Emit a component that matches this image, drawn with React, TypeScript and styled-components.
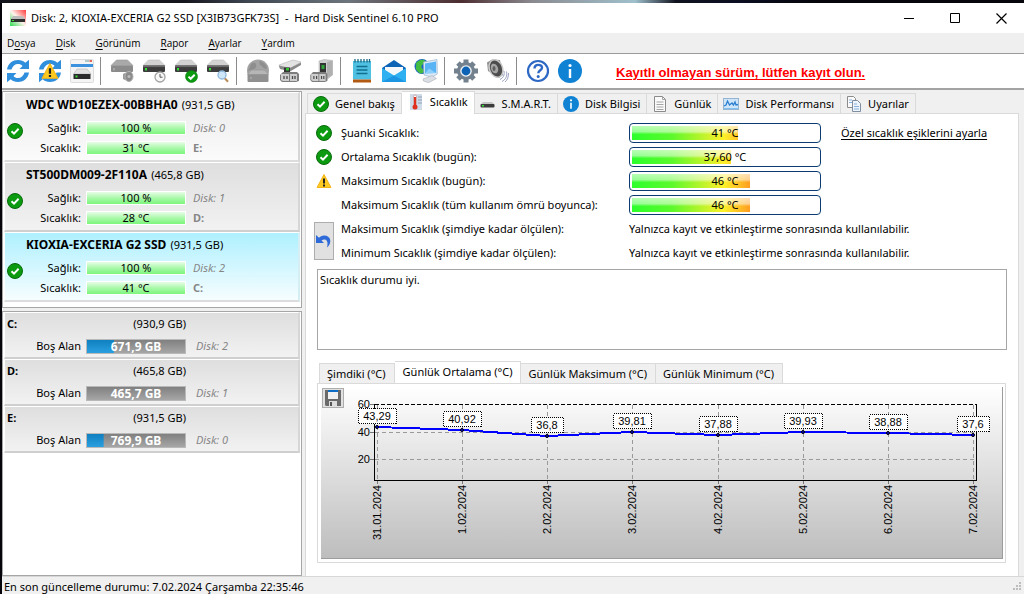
import React from 'react';
import styled, { createGlobalStyle, css } from 'styled-components';

const GlobalStyle = createGlobalStyle`
  *, *::before, *::after { box-sizing: border-box; }
  body {
    margin: 0;
    background: #05050b;
    color: #000;
    font: 11px/16px "Noto Sans", "Open Sans", sans-serif;
  }
  button { font: inherit; color: inherit; margin: 0; padding: 0; border: 0; background: none; }
`;

/* ---------- window frame ---------- */

const Desktop = styled.div`
  min-height: 100vh;
  padding: 3px 0 0 2px;
  display: flex;
  background: linear-gradient(to right, #14141c 0, #15151d 18%, #3c4450 24%, #6d757c 34%, #4c2d30 45%, #8a8a90 52%, #9fc0cc 62%, #10131f 66%, #0a0e20 72%, #05050b 80%) top / 100% 3px no-repeat, #05050b;
`;

const Window = styled.div`
  flex: 1;
  min-width: 0;
  display: flex;
  flex-direction: column;
  background: #f0f0f0;
`;

const TitleBar = styled.header`
  display: flex;
  align-items: center;
  height: 30px;
  padding-left: 8px;
  background: #fff;
`;

const Title = styled.h1`
  flex: 1;
  margin: 0 0 0 5px;
  font-size: 11px;
  font-weight: 400;
  white-space: pre;
`;

const CaptionButton = styled.button`
  display: grid;
  place-items: center;
  width: 46px;
  height: 28px;
`;

const MenuBar = styled.nav`
  display: flex;
  gap: 20px;
  height: 21px;
  padding-left: 5px;
  background: #efefef;
  border-bottom: 1px solid #9a9a9a;
`;

const MenuItem = styled.button`
  font-family: "Open Sans", sans-serif;
  font-size: 10px;
  u { text-underline-offset: 2px; }
`;

/* ---------- toolbar ---------- */

const Toolbar = styled.div`
  display: flex;
  align-items: center;
  height: 36px;
  background: #fff;
  border-bottom: 2px solid #a3a3a3;
`;

const ToolButton = styled.button`
  display: grid;
  place-items: center;
  width: 32px;
  height: 32px;
`;

const ToolSeparator = styled.span`
  width: 1px;
  height: 28px;
  margin: 0 5px 0 2px;
  background: #8a8a8a;
`;

const RegisterLink = styled.a`
  margin-left: 30px;
  padding-top: 4px;
  color: #f00;
  font: bold 13px/16px "Liberation Sans", sans-serif;
  text-underline-offset: 2px;
`;

/* ---------- left column ---------- */

const Main = styled.main`
  flex: 1;
  display: flex;
  gap: 3px;
  padding-right: 5px;
`;

const Sidebar = styled.aside`
  flex: 0 0 300px;
  display: flex;
  flex-direction: column;
  gap: 3px;
  padding-top: 1px;
`;

const SidePanel = styled.section<{ $fill?: boolean }>`
  flex: ${p => (p.$fill ? '1' : '0 0 auto')};
  padding: 0 1px 5px;
  background: #fff;
  border: 1px solid #a6a6a6;
`;

type Tone = 'light' | 'grey' | 'selected';

const tones: Record<Tone, string> = {
  light: 'linear-gradient(#e9e9e9, #fbfbfb)',
  grey: 'linear-gradient(#dedede, #f2f2f2)',
  selected: 'linear-gradient(#aef0ff, #f6fdff)',
};

const itemFrame = css<{ $tone: Tone }>`
  display: grid;
  align-items: center;
  column-gap: 3px;
  padding-left: 2px;
  background: ${p => tones[p.$tone]};
  border: solid #fff;
  border-width: 1px 2px 2px 1px;
  border-right-color: ${p => (p.$tone === 'selected' ? '#d5eef4' : '#d6d6d6')};
  border-bottom-color: ${p => (p.$tone === 'grey' ? '#cfcfcf' : '#dcdcdc')};
`;

const DiskItem = styled.article<{ $tone: Tone }>`
  ${itemFrame}
  grid-template: 24px 19px 19px / 16px 57px 100px 1fr;
  row-gap: 1px;
  height: 70px;
`;

const DiskName = styled.h2`
  grid-column: 2 / -1;
  margin: 0;
  font-size: 12px;
  line-height: 16px;
  font-weight: 700;
  span { padding-left: 1px; font-size: 11px; font-weight: 400; }
`;

const StatusCell = styled.span`
  grid-column: 1;
  grid-row: 2 / 4;
  align-self: start;
  height: 16px;
  margin-top: 5px;
`;

const FieldLabel = styled.span`
  grid-column: 2;
  padding-right: 2px;
  text-align: right;
  white-space: nowrap;
`;

const HealthBar = styled.span`
  height: 14px;
  border: 1px solid #fff;
  background: linear-gradient(#e6fde6, #a4f8a4 55%, #7df67d);
  line-height: 12px;
  text-align: center;
`;

const Note = styled.span<{ $bold?: boolean }>`
  padding-left: 4px;
  color: #868686;
  font-style: ${p => (p.$bold ? 'normal' : 'italic')};
  font-weight: ${p => (p.$bold ? 700 : 400)};
`;

const VolumeItem = styled.article<{ $tone: Tone }>`
  ${itemFrame}
  grid-template: 22px 22px / 16px 57px 100px 1fr;
  height: 47px;
`;

const VolumeNote = styled(Note)`
  padding-left: 7px;
`;

const VolumeName = styled.h2`
  grid-column: 1 / 3;
  margin: 0;
  font-size: 11px;
`;

const VolumeSize = styled.span`
  text-align: right;
`;

const SpaceBar = styled.span<{ $used: number }>`
  height: 15px;
  border: 1px solid #b9b9b9;
  background:
    linear-gradient(#0f80c0, #2a9fe0) left / ${p => p.$used}% 100% no-repeat,
    linear-gradient(#808080, #a6a6a6);
  color: #fff;
  font-size: 12px;
  font-weight: 700;
  line-height: 13px;
  text-align: center;
`;

/* ---------- right column ---------- */

const Content = styled.div`
  flex: 1;
  min-width: 0;
  display: flex;
  flex-direction: column;
`;

const TabList = styled.div<{ $indent: number }>`
  display: flex;
  align-items: flex-end;
  height: 23px;
  margin-left: ${p => p.$indent}px;
`;

const Tab = styled.button<{ $active?: boolean; $pad: number }>`
  display: flex;
  align-items: center;
  gap: 6px;
  height: 20px;
  padding: 0 ${p => p.$pad + 1}px 0 ${p => p.$pad}px;
  border: solid #dadada;
  border-width: 1px 1px 0 0;
  background: #f0f0f0;
  white-space: nowrap;
  &:first-child { border-left-width: 1px; }
  ${p => p.$active && css`
    height: 23px;
    margin-bottom: -1px;
    padding: 0 ${p.$pad + 1}px 3px;
    background: #fff;
    position: relative;
  `}
`;

const TabPanel = styled.section`
  flex: 1;
  display: flex;
  flex-direction: column;
  padding: 7px 11px 0;
  background: #fff;
  border: 1px solid #dadada;
  border-bottom: 0;
`;

const Readings = styled.div`
  display: grid;
  grid-template-columns: 20px 281px 192px 1fr;
  grid-auto-rows: 24px;
  column-gap: 7px;
  align-items: center;
  margin-left: -3px;
`;

const ReadingIcon = styled.span`
  grid-column: 1;
  justify-self: center;
  height: 16px;
`;

const ReadingLabel = styled.span`
  grid-column: 2;
  white-space: nowrap;
`;

const ReadingText = styled.span`
  grid-column: 3 / -1;
`;

const ThresholdLink = styled.a`
  padding-left: 13px;
  color: #000;
  text-underline-offset: 2px;
`;

const ResetButton = styled.button`
  grid-column: 1;
  grid-row: 5 / 7;
  display: grid;
  place-items: center;
  height: 38px;
  background: #e1e1e1;
  border: 1px solid #adadad;
`;

const Gauge = styled.span`
  grid-column: 3;
  display: grid;
  height: 20px;
  padding: 2px;
  border: 1px solid #0b3b70;
  border-radius: 4px;
  > * { grid-area: 1 / 1; }
`;

const GaugeFill = styled.span<{ $width: number }>`
  width: ${p => p.$width}px;
  background:
    linear-gradient(rgba(255, 255, 255, 0.65), rgba(255, 255, 255, 0.5) 40%, rgba(255, 255, 255, 0) 60%),
    linear-gradient(to right, #2cff2c 0, #5cf92c 40px, #fff02a 92px, #ff9020 122px);
`;

const GaugeValue = styled.span`
  line-height: 14px;
  text-align: center;
`;

const StatusText = styled.textarea`
  display: block;
  width: 100%;
  height: 81px;
  margin: 4px 0 10px;
  padding: 2px;
  border: 1px solid #a6a6a6;
  color: #000;
  font: inherit;
  resize: none;
`;

const ChartPanel = styled.div`
  position: relative;
  padding: 3px 2px 3px 3px;
  margin-right: 1px;
  border: 1px solid #dadada;
`;

const ChartFace = styled.div`
  border: solid #9c9c9c;
  border-width: 0 1px 1px 0;
  background: linear-gradient(#fff, #bdbdbd);
`;

const ChartSvg = styled.svg`
  display: block;
  width: 100%;
  font: 11px "Liberation Sans", sans-serif;
`;

const SaveButton = styled.button`
  position: absolute;
  top: 4px;
  left: 4px;
  display: grid;
  place-items: center;
  width: 22px;
  height: 20px;
  background: #e1e1e1;
  border: 1px solid #adadad;
`;

const StatusBar = styled.footer`
  display: flex;
  align-items: center;
  justify-content: space-between;
  height: 18px;
  padding: 2px 2px 0;
  border-top: 1px solid #d7d7d7;
`;

/* ---------- icons ---------- */

const CheckIcon = () => (
  <svg width="16" height="16" viewBox="0 0 16 16" aria-hidden="true">
    <circle cx="8" cy="8" r="7.5" fill="#0b9a10" stroke="#0a6b0d" />
    <path d="M4.5 8.2 7 10.6 11.6 5.8" fill="none" stroke="#fff" strokeWidth="2" />
  </svg>
);

const WarningShape = () => (
  <>
    <path d="M8 1.5 15 14.5H1Z" fill="#ffca1f" stroke="#f3b61a" strokeLinejoin="round" />
    <path d="M8 5.5v5M8 11.5v2" stroke="#222" strokeWidth="2" />
  </>
);

const WarningIcon = () => (
  <svg width="16" height="16" viewBox="0 0 16 16" aria-hidden="true"><WarningShape /></svg>
);

const InfoIcon = ({ size }: { size: number }) => (
  <svg width={size} height={size} viewBox="0 0 24 24" aria-hidden="true">
    <circle cx="12" cy="12" r="12" fill="#0f82d4" />
    <circle cx="12" cy="6.5" r="1.6" fill="#fff" />
    <path d="M12 10v9" stroke="#fff" strokeWidth="2.4" />
  </svg>
);

const Drive = ({ pale = false }: { pale?: boolean }) => (
  <>
    <path d="M6.5 1h11L23 6.5H1Z" fill={pale ? '#a9a9a9' : '#d2d2d2'} stroke={pale ? '#989898' : '#bdbdbd'} strokeWidth=".6" />
    <rect x="1" y="6.5" width="22" height="6.5" rx="1" fill={pale ? '#8b8b8b' : '#3c3c3c'} />
    {!pale && <rect x="1" y="6.5" width="22" height="1.6" fill="#6a6a6a" />}
    <rect x="3" y="9" width="2" height="2.4" fill={pale ? '#a6a6a6' : '#35e035'} />
  </>
);

const RefreshArrows = () => (
  <g fill="#2f8fdd">
    <path d="M1 10.5C2 4 7 1 12 1c3 0 5.5 1 7.3 2.8L23 .8V10h-9.500l3-3C15.500 5.600 13.800 5 12 5 9 5 6.500 7 5.500 10.500Z" />
    <path d="M23 13.500C22 20 17 23 12 23c-3 0-5.500-1-7.300-2.800L1 23.200V14h9.500l-3 3c1 1.400 2.700 2 4.500 2 3 0 5.500-2 6.500-5.500Z" />
  </g>
);

const PlugBlocks = () => (
  <>
    <path d="M5 13h14l2 2v7l-3 1H4l-2-2v-5Z" fill="#7d7d7d" />
    <path d="M3 15h8v7H5l-2-1ZM12 15h7v7h-7Z" fill="#cecece" />
    <path d="M6 17v3M9 17v3M14.500 17v3M17 17v3" stroke="#4a4a4a" strokeWidth="1.300" />
  </>
);

const toolIcons: Record<string, React.ReactNode> = {
  refresh: <RefreshArrows />,
  refreshWarn: (
    <>
      <RefreshArrows />
      <g transform="translate(3 3) scale(1.120)"><WarningShape /></g>
    </>
  ),
  overview: (
    <>
      <rect x=".5" y=".5" width="23" height="23" rx="1" fill="#f4f4f4" stroke="#dcdcdc" />
      <path d="M15 2h4" stroke="#9bb" strokeWidth="1.500" />
      <path d="M19.500 2H22" stroke="#d43a2c" strokeWidth="1.500" />
      <rect x="1" y="5" width="22" height="3" fill="#3d92e0" />
      <path d="M7 10h10l4 5H3.500Z" fill="#e2e2e2" stroke="#aaa" strokeWidth=".5" />
      <rect x="3.500" y="15" width="17" height="5" fill="#2c2c2c" />
      <rect x="5.500" y="16.500" width="2" height="2" fill="#35e035" />
    </>
  ),
  acoustic: (
    <>
      <Drive pale />
      <path d="m13 15 6-3 3 2v7l-3 2-6-3Z" fill="#9a9a9a" />
      <ellipse cx="19" cy="17.500" rx="4" ry="5" fill="#8a8a8a" stroke="#b4b4b4" />
      <circle cx="19" cy="17.500" r="1.600" fill="#bcbcbc" />
    </>
  ),
  schedule: (
    <>
      <Drive />
      <circle cx="18" cy="18" r="5" fill="#f7f7f7" stroke="#a3a3a3" strokeWidth="1.300" />
      <path d="M18 15v3.200h2.500" fill="none" stroke="#555" />
    </>
  ),
  test: (
    <>
      <Drive />
      <circle cx="17.500" cy="17.500" r="6" fill="#0b9a10" stroke="#0a7a0d" strokeWidth=".6" />
      <path d="m14.500 17.600 2.200 2.200 4-4" fill="none" stroke="#fff" strokeWidth="2" />
    </>
  ),
  search: (
    <>
      <Drive />
      <path d="m18.500 19 3.500 3.800" stroke="#b98c5a" strokeWidth="2" />
      <circle cx="16" cy="16" r="4" fill="#cfe7fa" stroke="#8fb8dc" strokeWidth="1.300" />
    </>
  ),
  network: (
    <>
      <circle cx="12" cy="11.500" r="11" fill="#a3a3a3" />
      <path d="M5 5c4-3 6 0 5 3s-5 2-8 4M13 2c6 1 8 5 8 8-4 0-4-3-7-4Z" fill="#8e8e8e" />
      <path d="M5.500 11h13l4 4.500H1.500Z" fill="#b6b6b6" stroke="#959595" strokeWidth=".6" />
      <rect x="1.500" y="15.500" width="21" height="7.500" rx="1" fill="#909090" />
      <path d="M4 19h2" stroke="#b9b9b9" />
    </>
  ),
  power: (
    <>
      <path d="m1 6 14-5 8 2-10 6H2Z" fill="#e3e3e3" stroke="#b2b2b2" strokeWidth=".6" />
      <path d="M1 6.500 12 9v3.500L2 10ZM12 9l11-5.500V6l-11 6.500Z" fill="#8a8a8a" />
      <path d="M6 8.500h6V13H6Z" fill="#333" />
      <path d="M8 9h3v2.500H8Z" fill="#35c535" />
      <PlugBlocks />
    </>
  ),
  eject: (
    <>
      <path d="m9 2 5-1.500 8.500 1V16l-5 4H9Z" fill="#cfcfcf" stroke="#a4a4a4" strokeWidth=".5" />
      <path d="m17 3 5.500-1.500V16L17 19Z" fill="#b0b0b0" />
      <path d="M10 4h6v10h-6Z" fill="#333" />
      <path d="M11.500 6h3v4h-3Z" fill="#2fa53a" />
      <g transform="translate(-1.500 0) scale(.9 1)"><PlugBlocks /></g>
    </>
  ),
  report: (
    <>
      <rect x="3" y="2" width="18" height="18.500" fill="#4fc0e2" />
      <path d="M5 0v3.500M8 0v3.500M11 0v3.500M14 0v3.500M17 0v3.500M19.500 0v3.500" stroke="#17667f" strokeWidth="1.300" />
      <path d="M6.500 7.500h11M6.500 11h11M6.500 14.500h11" stroke="#136f8f" strokeWidth="1.500" />
      <rect x="3" y="20.500" width="18" height="3" fill="#b35a12" />
    </>
  ),
  mail: (
    <>
      <path d="M0 9 12 1l12 8v3H0Z" fill="#0d63b5" />
      <path d="M3 8h18v8H3Z" fill="#f4f8fb" />
      <path d="m0 9 12 7.500L24 9v14H0Z" fill="#2fb0f0" />
      <path d="m0 23 12-6.500L24 23Z" fill="#1c96e2" />
    </>
  ),
  remote: (
    <>
      <circle cx="8" cy="7.500" r="7.500" fill="#1c62c4" />
      <path d="M1.500 5c3-5 8-5 10-3 0 4-3 2-4 5s4 3 2 6-5 1-7-2 1-4-1-6Z" fill="#42bd42" />
      <path d="m9.500 3 13.500-2.500.3 14.500-5.300 3-8-2Z" fill="#dcebf8" stroke="#9cb3c8" strokeWidth=".7" />
      <path d="m11 4.500 11-2 .2 11.500-11.200.5Z" fill="#58b4f4" />
      <path d="m11 14.500 4-5 7 4.500Z" fill="#8fd0fb" />
      <path d="m9 20 9-3.500 4.500 3-8 4.200-5-1.700Z" fill="#dadfe5" stroke="#a7adb5" strokeWidth=".6" />
    </>
  ),
  settings: (
    <>
      <g stroke="#73818e" strokeWidth="5">
        <path d="M12 .5v23M0 12h24" />
        <path d="m4 4 16 16M20 4 4 20" />
      </g>
      <circle cx="12" cy="12" r="9" fill="#73818e" />
      <circle cx="12" cy="12" r="5.800" fill="#eef2f5" />
      <circle cx="12" cy="12" r="4.400" fill="#0c62b5" />
    </>
  ),
  sound: (
    <>
      <path d="M1 3.500 6 .5l8 .5 3 15-4 3L2 12Z" fill="#8d8d8d" />
      <ellipse cx="10" cy="9.500" rx="6.500" ry="9" transform="rotate(-22 10 9.500)" fill="#4c4c4c" stroke="#c9c9c9" strokeWidth="1.500" />
      <ellipse cx="8.500" cy="9.500" rx="3.500" ry="5" transform="rotate(-22 8.500 9.500)" fill="#a5a5a5" />
      <ellipse cx="8" cy="9.500" rx="1.500" ry="2.500" fill="#5d5d5d" />
      <path d="M18 12c1 4-1 7-4 8.500M20.500 12.500c1 5-1 8-4.500 10M22.500 14c0 4-1 7-3.500 9" fill="none" stroke="#9aa1c4" />
    </>
  ),
  help: (
    <>
      <circle cx="12" cy="12" r="10" fill="#fff" stroke="#2d68c4" strokeWidth="2.200" />
      <path d="M8.500 9.500c0-5 7.500-4.500 7.500-.8 0 2.600-3.700 2.600-3.700 5.600" fill="none" stroke="#2d68c4" strokeWidth="2.400" />
      <circle cx="12.200" cy="17.500" r="1.500" fill="#2d68c4" />
    </>
  ),
};

const TitleIcon = () => (
  <svg width="16" height="16" viewBox="0 0 16 16" aria-hidden="true">
    <defs>
      <linearGradient id="corner" x1="1" y1="0" x2="0" y2="1">
        <stop offset="0" stopColor="#ff3a3a" />
        <stop offset=".5" stopColor="#fff3ee" />
        <stop offset="1" stopColor="#2fdc50" />
      </linearGradient>
    </defs>
    <rect width="16" height="16" fill="url(#corner)" />
    <path d="M3 6h10l2 3H1Z" fill="#bdbdbd" />
    <rect x="1" y="9" width="14" height="3" fill="#2f2f2f" />
    <rect x="2" y="10" width="2" height="1" fill="#35e035" />
  </svg>
);

const tabIcons: Record<string, React.ReactNode> = {
  heat: (
    <>
      <rect x="2" width="12" height="16" fill="#cfdbe6" />
      <path d="M10 3h4M10 6h4M10 9h4" stroke="#8fa3b5" />
      <rect x="5.500" y="1" width="3" height="11" rx="1.500" fill="#fff" stroke="#b88" strokeWidth=".6" />
      <path d="M7 3v9" stroke="#e0301e" strokeWidth="2" />
      <circle cx="7" cy="13" r="2.500" fill="#e0301e" />
    </>
  ),
  smart: (
    <>
      <path d="M3 6h9l2.500 2.500H.5Z" fill="#c5c5c5" />
      <rect x=".5" y="8" width="14" height="3.500" rx="1" fill="#3c3c3c" />
      <rect x="2" y="9" width="2" height="1.500" fill="#35e035" />
    </>
  ),
  log: (
    <>
      <path d="M2.500.5h8l3 3v12h-11Z" fill="#fafafa" stroke="#8b8b8b" />
      <path d="M10.500.5v3h3M4.500 6h7M4.500 8.500h7M4.500 11h7M4.500 13.500h7" fill="none" stroke="#a5a5a5" />
    </>
  ),
  perf: (
    <>
      <rect x=".5" y="2.500" width="15" height="11" fill="#cfe6fa" stroke="#93b5d2" />
      <path d="M1 12.500h14" stroke="#7fc0f0" />
      <path d="m1 10 2-1 1.500-4L6.500 9 9 7l1.500 2L12 6l1 3 2-.5" fill="none" stroke="#2b7fd0" strokeWidth="1.300" />
    </>
  ),
  alerts: (
    <>
      <path d="M1.500.5h6l2 2v9h-8Z" fill="#fafafa" stroke="#8b8b8b" />
      <path d="M6.500 4.500h5l3 3v8h-8Z" fill="#eef5fc" stroke="#7f8f9f" />
      <path d="M3 4h3M3 6.500h3M8 8h3M8 10.500h5M8 13h5" stroke="#86b1dd" />
    </>
  ),
};

const TabIcon = ({ name }: { name: string }) => {
  if (name === 'check') return <CheckIcon />;
  if (name === 'info') return <InfoIcon size={16} />;
  return <svg width="16" height="16" viewBox="0 0 16 16" aria-hidden="true">{tabIcons[name]}</svg>;
};

const SizeGrip = () => (
  <svg width="9" height="9" viewBox="0 0 9 9" fill="#bdbdbd" aria-hidden="true">
    <path d="M6 0h2v2H6ZM6 3h2v2H6ZM6 6h2v2H6ZM3 3h2v2H3ZM3 6h2v2H3ZM0 6h2v2H0Z" />
  </svg>
);

/* ---------- data ---------- */

const menus = [['D', 'o', 'sya'], ['', 'D', 'isk'], ['', 'G', 'örünüm'], ['', 'R', 'apor'], ['', 'A', 'yarlar'], ['', 'Y', 'ardım']];

const tools: [string, string][][] = [
  [['refresh', 'Yenile'], ['refreshWarn', 'Uyarıları yenile'], ['overview', 'Genel görünüm']],
  [['acoustic', 'Akustik'], ['schedule', 'Zamanla'], ['test', 'Disk testi'], ['search', 'Yüzey testi']],
  [['network', 'Ağ'], ['power', 'Güç'], ['eject', 'Çıkar']],
  [['report', 'Rapor'], ['mail', 'E-posta'], ['remote', 'Uzaktan izleme']],
  [['settings', 'Ayarlar'], ['sound', 'Ses']],
  [['help', 'Yardım'], ['info', 'Hakkında']],
];

const disks: { name: string; size: string; temp: string; index: number; letter: string; tone: Tone }[] = [
  { name: 'WDC WD10EZEX-00BBHA0', size: '931,5 GB', temp: '31 °C', index: 0, letter: 'E:', tone: 'light' },
  { name: 'ST500DM009-2F110A', size: '465,8 GB', temp: '28 °C', index: 1, letter: 'D:', tone: 'grey' },
  { name: 'KIOXIA-EXCERIA G2 SSD', size: '931,5 GB', temp: '41 °C', index: 2, letter: 'C:', tone: 'selected' },
];

const volumes = [
  { letter: 'C:', size: '930,9 GB', free: '671,9 GB', used: 28, index: 2 },
  { letter: 'D:', size: '465,8 GB', free: '465,7 GB', used: 0, index: 1 },
  { letter: 'E:', size: '931,5 GB', free: '769,9 GB', used: 17, index: 0 },
];

const tabs: [string, string][] = [
  ['check', 'Genel bakış'], ['heat', 'Sıcaklık'], ['smart', 'S.M.A.R.T.'], ['info', 'Disk Bilgisi'],
  ['log', 'Günlük'], ['perf', 'Disk Performansı'], ['alerts', 'Uyarılar'],
];

const readings = [
  { label: 'Şuanki Sıcaklık:', value: '41 °C', width: 106, icon: 'ok' },
  { label: 'Ortalama Sıcaklık (bugün):', value: '37,60 °C', width: 99, icon: 'ok' },
  { label: 'Maksimum Sıcaklık (bugün):', value: '46 °C', width: 118, icon: 'warn' },
  { label: 'Maksimum Sıcaklık (tüm kullanım ömrü boyunca):', value: '46 °C', width: 118, icon: '' },
];

const unregistered = 'Yalnızca kayıt ve etkinleştirme sonrasında kullanılabilir.';

const chartTabs = ['Şimdiki (°C)', 'Günlük Ortalama (°C)', 'Günlük Maksimum (°C)', 'Günlük Minimum (°C)'];

const points = [
  { date: '31.01.2024', label: '43,29', x: 56, y: 40 },
  { date: '1.02.2024', label: '40,92', x: 141, y: 43 },
  { date: '2.02.2024', label: '36,8', x: 226, y: 49 },
  { date: '3.02.2024', label: '39,81', x: 311, y: 45 },
  { date: '4.02.2024', label: '37,88', x: 397, y: 48 },
  { date: '5.02.2024', label: '39,93', x: 482, y: 45 },
  { date: '6.02.2024', label: '38,88', x: 567, y: 46 },
  { date: '7.02.2024', label: '37,6', x: 652, y: 48 },
];

const TemperatureChart = () => (
  <ChartSvg viewBox="0 0 681 171" role="img" aria-label="Günlük Ortalama (°C)">
    <g shapeRendering="crispEdges" fill="none">
      <g stroke="#9a9a9a" strokeDasharray="4 3">
        <path d="M54 45.500H655M54 72.500H655" />
        {points.map(p => <path key={p.date} d={`M${p.x + 0.5} 18V93`} />)}
      </g>
      <path d="M49 17.500h8M49 45.500h5M49 72.500h5" stroke="#777" />
      {points.map(p => <path key={p.date} d={`M${p.x + 0.5} 94v3`} stroke="#777" />)}
      <path d="M54 17.500H655" stroke="#000" strokeDasharray="4 2" />
      <path d="M53.500 17V93.500H655.500V17" stroke="#000" />
    </g>
    <polyline points={points.map(p => `${p.x},${p.y}`).join(' ')} fill="none" stroke="#00f" strokeWidth="2" shapeRendering="crispEdges" />
    {points.map(p => {
      const width = p.label.length > 4 ? 38 : 32;
      return (
        <g key={p.date}>
          <circle cx={p.x} cy={p.y} r="1.500" fill="#00c" stroke="#000" />
          <rect x={p.x - width / 2 + 0.5} y={p.y - 18.5} width={width} height="15" fill="#fff" stroke="#000" strokeDasharray="1 1" shapeRendering="crispEdges" />
          <text x={p.x} y={p.y - 7} textAnchor="middle">{p.label}</text>
          <text transform={`translate(${p.x + 4} 98) rotate(-90)`} textAnchor="end">{p.date}</text>
        </g>
      );
    })}
    <text x="49" y="21" textAnchor="end">60</text>
    <text x="49" y="49" textAnchor="end">40</text>
    <text x="49" y="76" textAnchor="end">20</text>
  </ChartSvg>
);

export default function App() {
  return (
    <>
      <GlobalStyle />
      <Desktop>
        <Window>
          <TitleBar>
            <TitleIcon />
            <Title>{'Disk: 2, KIOXIA-EXCERIA G2 SSD [X3IB73GFK73S]  -  Hard Disk Sentinel 6.10 PRO'}</Title>
            <CaptionButton aria-label="Simge durumuna küçült">
              <svg width="11" height="11" viewBox="0 0 11 11"><path d="M0 5.500h10" stroke="#000" /></svg>
            </CaptionButton>
            <CaptionButton aria-label="Ekranı kapla">
              <svg width="11" height="11" viewBox="0 0 11 11"><path d="M.5.5h9v9h-9Z" fill="none" stroke="#000" /></svg>
            </CaptionButton>
            <CaptionButton aria-label="Kapat">
              <svg width="11" height="11" viewBox="0 0 11 11"><path d="m.5.5 10 10m0-10-10 10" stroke="#000" strokeWidth="1.200" /></svg>
            </CaptionButton>
          </TitleBar>

          <MenuBar>
            {menus.map(([before, key, after]) => (
              <MenuItem key={key + after}>{before}<u>{key}</u>{after}</MenuItem>
            ))}
          </MenuBar>

          <Toolbar>
            {tools.map((group, i) => (
              <React.Fragment key={i}>
                {i > 0 && <ToolSeparator />}
                {group.map(([icon, label]) => (
                  <ToolButton key={icon} aria-label={label}>
                    {icon === 'info'
                      ? <InfoIcon size={24} />
                      : <svg width="24" height="24" viewBox="0 0 24 24" aria-hidden="true">{toolIcons[icon]}</svg>}
                  </ToolButton>
                ))}
              </React.Fragment>
            ))}
            <RegisterLink href="#kayit">Kayıtlı olmayan sürüm, lütfen kayıt olun.</RegisterLink>
          </Toolbar>

          <Main>
            <Sidebar>
              <SidePanel>
                {disks.map(d => (
                  <DiskItem key={d.name} $tone={d.tone}>
                    <DiskName>{d.name} <span>({d.size})</span></DiskName>
                    <StatusCell><CheckIcon /></StatusCell>
                    <FieldLabel>Sağlık:</FieldLabel>
                    <HealthBar>100 %</HealthBar>
                    <Note>Disk: {d.index}</Note>
                    <FieldLabel>Sıcaklık:</FieldLabel>
                    <HealthBar>{d.temp}</HealthBar>
                    <Note $bold>{d.letter}</Note>
                  </DiskItem>
                ))}
              </SidePanel>
              <SidePanel $fill>
                {volumes.map(v => (
                  <VolumeItem key={v.letter} $tone="grey">
                    <VolumeName>{v.letter}</VolumeName>
                    <VolumeSize>({v.size})</VolumeSize>
                    <FieldLabel>Boş Alan</FieldLabel>
                    <SpaceBar $used={v.used}>{v.free}</SpaceBar>
                    <VolumeNote>Disk: {v.index}</VolumeNote>
                  </VolumeItem>
                ))}
              </SidePanel>
            </Sidebar>

            <Content>
              <TabList role="tablist" $indent={2}>
                {tabs.map(([icon, label], i) => (
                  <Tab key={label} role="tab" aria-selected={i === 1} $active={i === 1} $pad={5}>
                    <TabIcon name={icon} />{label}
                  </Tab>
                ))}
              </TabList>
              <TabPanel role="tabpanel">
                <Readings>
                  {readings.map((r, i) => (
                    <React.Fragment key={r.label}>
                      {r.icon && <ReadingIcon>{r.icon === 'ok' ? <CheckIcon /> : <WarningIcon />}</ReadingIcon>}
                      <ReadingLabel>{r.label}</ReadingLabel>
                      <Gauge>
                        <GaugeFill $width={r.width} />
                        <GaugeValue>{r.value}</GaugeValue>
                      </Gauge>
                      {i === 0 && <ThresholdLink href="#esikler">Özel sıcaklık eşiklerini ayarla</ThresholdLink>}
                    </React.Fragment>
                  ))}
                  <ResetButton aria-label="Sıfırla">
                    <svg width="18" height="18" viewBox="0 0 18 18" aria-hidden="true">
                      <path d="M1 3v8h8L6.500 8.500C10 6 14 8 12 15.500 17.500 11 16 3.500 9 3.500 7 3.500 5 4.500 4 5.800Z" fill="#2f6bd8" />
                    </svg>
                  </ResetButton>
                  <ReadingLabel>Maksimum Sıcaklık (şimdiye kadar ölçülen):</ReadingLabel>
                  <ReadingText>{unregistered}</ReadingText>
                  <ReadingLabel>Minimum Sıcaklık (şimdiye kadar ölçülen):</ReadingLabel>
                  <ReadingText>{unregistered}</ReadingText>
                </Readings>
                <StatusText aria-label="Durum" readOnly defaultValue="Sıcaklık durumu iyi." />
                <TabList role="tablist" $indent={2}>
                  {chartTabs.map((label, i) => (
                    <Tab key={label} role="tab" aria-selected={i === 1} $active={i === 1} $pad={7}>{label}</Tab>
                  ))}
                </TabList>
                <ChartPanel>
                  <ChartFace><TemperatureChart /></ChartFace>
                  <SaveButton aria-label="Kaydet">
                    <svg width="16" height="16" viewBox="0 0 16 16" aria-hidden="true">
                      <path d="M0 0h16v16H1l-1-1Z" fill="#6a6a6a" />
                      <rect x="3" width="10" height="9" fill="#f1f1f1" />
                      <rect x="3" width="10" height="2" fill="#0d6cc4" />
                      <rect x="4" y="11" width="8" height="5" fill="#dcdcdc" />
                      <rect x="5" y="12" width="2" height="4" fill="#555" />
                    </svg>
                  </SaveButton>
                </ChartPanel>
              </TabPanel>
            </Content>
          </Main>

          <StatusBar>
            <span>En son güncelleme durumu: 7.02.2024 Çarşamba 22:35:46</span>
            <SizeGrip />
          </StatusBar>
        </Window>
      </Desktop>
    </>
  );
}
